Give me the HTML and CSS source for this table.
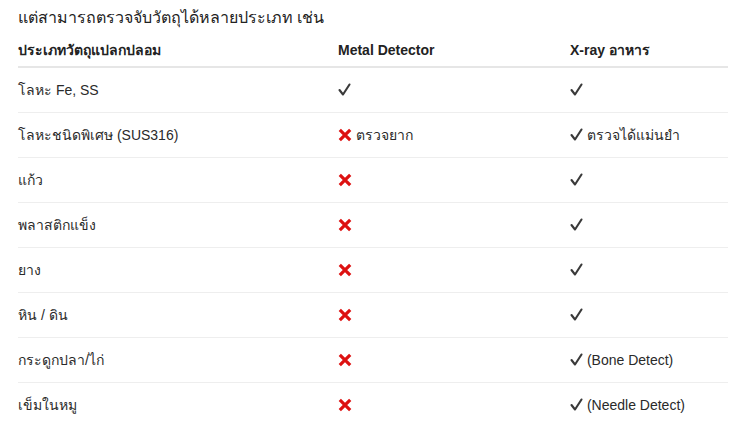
FILE: index.html
```html
<!DOCTYPE html>
<html lang="th">
<head>
<meta charset="utf-8">
<link rel="stylesheet" href="styles.css">
</head>
<body>
<div class="page">
  <h2 class="title">แต่สามารถตรวจจับวัตถุได้หลายประเภท เช่น</h2>
  <table class="tbl">
    <colgroup><col class="c1"><col class="c2"><col class="c3"></colgroup>
    <thead>
      <tr><th>ประเภทวัตถุแปลกปลอม</th><th>Metal Detector</th><th>X-ray อาหาร</th></tr>
    </thead>
    <tbody>
      <tr><td>โลหะ Fe, SS</td><td><svg class="ok" viewBox="0 0 13 13"><path d="M1.5 7L5 11.5L11.5 1.5"/></svg></td><td><svg class="ok" viewBox="0 0 13 13"><path d="M1.5 7L5 11.5L11.5 1.5"/></svg></td></tr>
      <tr><td>โลหะชนิดพิเศษ (SUS316)</td><td><svg class="no" viewBox="0 0 14 14"><path d="M1.8 1.8L12.2 12.2M12.2 1.8L1.8 12.2"/></svg> ตรวจยาก</td><td><svg class="ok" viewBox="0 0 13 13"><path d="M1.5 7L5 11.5L11.5 1.5"/></svg> ตรวจได้แม่นยำ</td></tr>
      <tr><td>แก้ว</td><td><svg class="no" viewBox="0 0 14 14"><path d="M1.8 1.8L12.2 12.2M12.2 1.8L1.8 12.2"/></svg></td><td><svg class="ok" viewBox="0 0 13 13"><path d="M1.5 7L5 11.5L11.5 1.5"/></svg></td></tr>
      <tr><td>พลาสติกแข็ง</td><td><svg class="no" viewBox="0 0 14 14"><path d="M1.8 1.8L12.2 12.2M12.2 1.8L1.8 12.2"/></svg></td><td><svg class="ok" viewBox="0 0 13 13"><path d="M1.5 7L5 11.5L11.5 1.5"/></svg></td></tr>
      <tr><td>ยาง</td><td><svg class="no" viewBox="0 0 14 14"><path d="M1.8 1.8L12.2 12.2M12.2 1.8L1.8 12.2"/></svg></td><td><svg class="ok" viewBox="0 0 13 13"><path d="M1.5 7L5 11.5L11.5 1.5"/></svg></td></tr>
      <tr><td>หิน / ดิน</td><td><svg class="no" viewBox="0 0 14 14"><path d="M1.8 1.8L12.2 12.2M12.2 1.8L1.8 12.2"/></svg></td><td><svg class="ok" viewBox="0 0 13 13"><path d="M1.5 7L5 11.5L11.5 1.5"/></svg></td></tr>
      <tr><td>กระดูกปลา/ไก่</td><td><svg class="no" viewBox="0 0 14 14"><path d="M1.8 1.8L12.2 12.2M12.2 1.8L1.8 12.2"/></svg></td><td><svg class="ok" viewBox="0 0 13 13"><path d="M1.5 7L5 11.5L11.5 1.5"/></svg> (Bone Detect)</td></tr>
      <tr><td>เข็มในหมู</td><td><svg class="no" viewBox="0 0 14 14"><path d="M1.8 1.8L12.2 12.2M12.2 1.8L1.8 12.2"/></svg></td><td><svg class="ok" viewBox="0 0 13 13"><path d="M1.5 7L5 11.5L11.5 1.5"/></svg> (Needle Detect)</td></tr>
    </tbody>
  </table>
</div>
</body>
</html>
```
FILE: styles.css
```css
html, body {
  margin: 0;
  padding: 0;
  background: #fff;
}
body {
  font-family: "Liberation Sans", "Noto Sans", "DejaVu Sans", sans-serif;
  color: #222;
}
.page {
  padding: 7px 8px 0 18px;
}
.title {
  margin: 0;
  font-size: 16px;
  font-weight: normal;
  line-height: 22px;
  color: #222;
}
.tbl {
  margin-top: 5px;
  width: 710px;
  border-collapse: collapse;
  font-size: 14px;
}
.c1 { width: 320px; }
.c2 { width: 232px; }
.c3 { width: 158px; }
.tbl th {
  text-align: left;
  font-weight: bold;
  padding: 8px 0 7px;
  line-height: 17px;
  border-bottom: 2px solid #e6e6e6;
  color: #222;
}
.tbl td {
  padding: 12px 0;
  line-height: 20px;
  border-bottom: 1px solid #eeeeee;
  color: #2a2a2a;
  white-space: nowrap;
}
.tbl tbody tr:last-child td {
  border-bottom: none;
}
.ok, .no {
  display: inline-block;
  vertical-align: -1px;
  fill: none;
}
.ok {
  width: 13px;
  height: 13px;
  stroke: #3a3a3a;
  stroke-width: 2.1;
  stroke-linecap: round;
  stroke-linejoin: round;
}
.no {
  width: 14px;
  height: 14px;
  vertical-align: -2px;
  stroke: #dd1111;
  stroke-width: 3.2;
  stroke-linecap: butt;
}
```
